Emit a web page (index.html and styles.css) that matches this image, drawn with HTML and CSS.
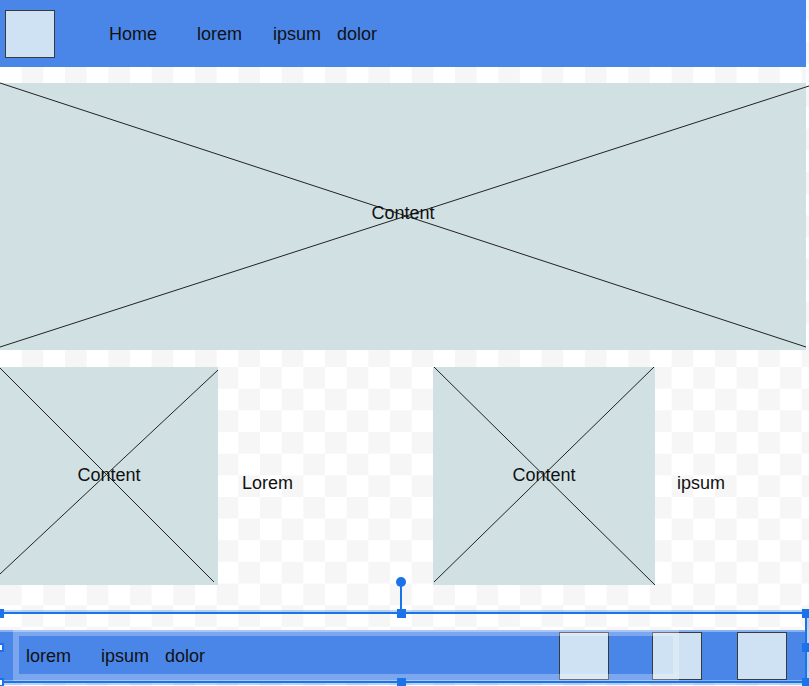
FILE: index.html
```html
<!DOCTYPE html>
<html>
<head>
<meta charset="utf-8">
<title>Wireframe</title>
<link rel="stylesheet" href="styles.css">
</head>
<body>
<div class="page">
  <header class="topbar">
    <div class="logo"></div>
    <nav class="nav">
      <span class="nav-item w88">Home</span>
      <span class="nav-item w76">lorem</span>
      <span class="nav-item w64">ipsum</span>
      <span class="nav-item">dolor</span>
    </nav>
  </header>
  <div class="gap-top"></div>
  <section class="hero placeholder">
    <svg class="cross" preserveAspectRatio="none" viewBox="0 0 806 267">
      <line x1="0" y1="0" x2="806" y2="264"/>
      <line x1="0" y1="264" x2="809" y2="3"/>
    </svg>
    <span class="ph-label">Content</span>
  </section>
  <section class="row">
    <div class="tile placeholder">
      <svg class="cross" preserveAspectRatio="none" viewBox="0 0 218 218">
        <line x1="0" y1="1" x2="214" y2="215"/>
        <line x1="218" y1="3" x2="0" y2="207"/>
      </svg>
      <span class="ph-label">Content</span>
    </div>
    <div class="caption">Lorem</div>
    <div class="tile tile-wide placeholder">
      <svg class="cross" preserveAspectRatio="none" viewBox="0 0 222 218">
        <line x1="1" y1="0" x2="222" y2="218"/>
        <line x1="221" y1="0" x2="1" y2="215"/>
      </svg>
      <span class="ph-label">Content</span>
    </div>
    <div class="caption caption-right">ipsum</div>
  </section>
  <footer class="bottombar">
    <nav class="nav footer-nav">
      <span class="nav-item w75">lorem</span>
      <span class="nav-item w64">ipsum</span>
      <span class="nav-item">dolor</span>
    </nav>
    <div class="squares">
      <div class="sq"></div>
      <div class="sq sq2"></div>
      <div class="sq sq3"></div>
    </div>
  </footer>

  <div class="hover-box"></div>
  <div class="selection">
    <span class="handle h-tl"></span>
    <span class="handle h-tm"></span>
    <span class="handle h-tr"></span>
    <span class="handle h-ml hollow"></span>
    <span class="handle h-mr"></span>
    <span class="handle h-bl hollow"></span>
    <span class="handle h-bm"></span>
    <span class="handle h-br"></span>
    <span class="rotate-stem"></span>
    <span class="rotate-dot"></span>
  </div>
</div>
</body>
</html>
```

FILE: styles.css
```css
html, body {
  margin: 0;
  padding: 0;
}

body {
  width: 809px;
  height: 686px;
  overflow: hidden;
  font-family: "Liberation Sans", Arial, sans-serif;
  color: #111;
  background-color: #fff;
  background-image: repeating-conic-gradient(#f6f6f6 0 25%, #ffffff 0 50%);
  background-size: 43.33px 43.33px;
  background-position: 0 42px;
}

.page {
  position: relative;
  width: 806px;
  height: 686px;
}

/* Header */
.topbar {
  height: 67px;
  background: #4a86e8;
  display: flex;
  align-items: center;
}

.logo {
  width: 48px;
  height: 46px;
  margin-left: 5px;
  margin-top: 1px;
  background: #cfe2f3;
  border: 1px solid #3a3a3a;
}

.nav {
  display: flex;
  align-items: center;
  font-size: 18px;
  line-height: 20px;
}

.topbar .nav {
  margin-left: 54px;
}

.nav-item {
  display: block;
  white-space: nowrap;
}

.w88 { width: 88px; }
.w76 { width: 76px; }
.w75 { width: 75px; }
.w64 { width: 64px; }

.gap-top {
  height: 16px;
  background-image: repeating-conic-gradient(#f6f6f6 0 25%, #ffffff 0 50%);
  background-size: 43.33px 43.33px;
  background-position: 0 0;
}

/* Placeholders */
.placeholder {
  position: relative;
  background: #d0e0e3;
  display: flex;
  align-items: center;
  justify-content: center;
}

.cross {
  position: absolute;
  left: 0;
  top: 0;
  width: 100%;
  height: 100%;
  overflow: visible;
}

.cross line {
  stroke: #222;
  stroke-width: 1;
  vector-effect: non-scaling-stroke;
}

.ph-label {
  position: relative;
  font-size: 18px;
  line-height: 20px;
  color: #111;
}

.hero {
  height: 267px;
}

.hero .ph-label {
  margin-top: -7px;
  margin-left: 0;
}

/* Row */
.row {
  display: flex;
  height: 218px;
  margin-top: 17px;
}

.tile {
  width: 218px;
  flex: none;
}

.tile-wide {
  width: 222px;
}

.tile .ph-label {
  margin-top: -3px;
}

.caption {
  width: 191px;
  padding-left: 24px;
  padding-top: 106px;
  font-size: 18px;
  line-height: 20px;
}

.caption-right {
  padding-left: 22px;
  width: auto;
}

/* Bottom bar */
.bottombar {
  margin-top: 45px;
  height: 52px;
  background: #4a86e8;
  box-shadow: inset 0 2px 0 rgba(255, 255, 255, 0.35), inset 0 -2px 0 rgba(255, 255, 255, 0.35);
  display: flex;
  align-items: center;
  justify-content: space-between;
}

.footer-nav {
  margin-left: 26px;
}

.squares {
  display: flex;
  align-items: center;
  margin-right: 19px;
}

.sq {
  width: 48px;
  height: 46px;
  background: #cfe2f3;
  border: 1px solid #3a3a3a;
}

.sq2 {
  margin-left: 43px;
}

.sq3 {
  margin-left: 35px;
}

/* Editor overlays */
.hover-box {
  position: absolute;
  left: 13px;
  top: 630px;
  width: 654px;
  height: 38px;
  border: 6px solid rgba(255, 255, 255, 0.28);
  border-bottom-width: 8px;
  pointer-events: none;
}

.selection {
  position: absolute;
  left: -2px;
  top: 612px;
  width: 805px;
  height: 67px;
  border: 2px solid #1a73e8;
  box-shadow: 0 0 0 2px rgba(26, 115, 232, 0.3);
  pointer-events: none;
}

.handle {
  position: absolute;
  width: 9px;
  height: 9px;
  box-sizing: border-box;
  background: #1a73e8;
}

.handle.hollow {
  background: #fff;
  border: 2px solid #1a73e8;
}

.h-tl { left: -5px; top: -5px; }
.h-tm { left: 397px; top: -5px; }
.h-tr { right: -6px; top: -5px; }
.h-ml { left: -5px; top: 29px; }
.h-mr { right: -6px; top: 29px; }
.h-bl { left: -5px; bottom: -6px; }
.h-bm { left: 397px; bottom: -6px; }
.h-br { right: -6px; bottom: -6px; }

.rotate-stem {
  position: absolute;
  left: 400px;
  top: -28px;
  width: 2px;
  height: 24px;
  background: #1a73e8;
}

.rotate-dot {
  position: absolute;
  left: 396px;
  top: -37px;
  width: 10px;
  height: 10px;
  border-radius: 50%;
  background: #1a73e8;
}
```
